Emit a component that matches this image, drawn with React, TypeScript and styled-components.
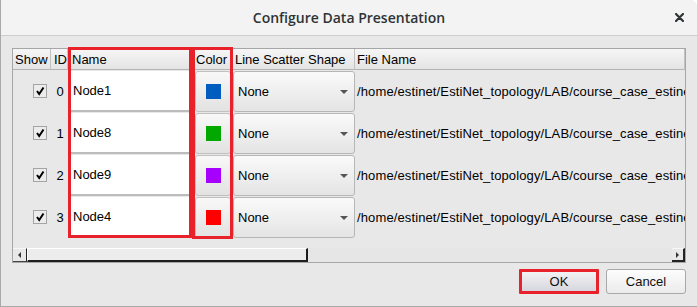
import React from 'react';
import styled, { createGlobalStyle } from 'styled-components';

const Global = createGlobalStyle`
  html, body { margin: 0; padding: 0; background: #ffffff; }
  body { font-family: "Liberation Sans", Arial, sans-serif; }
  * { box-sizing: border-box; }
`;

const Dialog = styled.div`
  position: relative;
  width: 697px;
  height: 307px;
  display: flex;
  flex-direction: column;
  background: #e8e8e8;
  border-left: 1px solid #a9a9a9;
  border-bottom: 1px solid #a9a9a9;
  border-top-right-radius: 7px;
  overflow: hidden;
`;

const TitleBar = styled.div`
  height: 36px;
  flex: none;
  display: grid;
  grid-template-columns: 1fr auto 1fr;
  align-items: center;
  background: #f3f3f3;
  border-bottom: 1px solid #cdcdcd;
`;

const Title = styled.div`
  grid-column: 2;
  font-family: "Open Sans", "Noto Sans", sans-serif;
  font-weight: 600;
  font-size: 14px;
  color: #2e3436;
`;

const Close = styled.div`
  grid-column: 3;
  justify-self: end;
  padding-right: 13px;
  display: flex;
  align-items: center;
`;

const Body = styled.div`
  flex: 1;
  display: flex;
  flex-direction: column;
  padding: 12px 11px 0 11px;
`;

const Frame = styled.div`
  height: 215px;
  border: 1px solid #a6a6a6;
  display: flex;
  flex-direction: column;
  overflow: hidden;
`;

const Table = styled.div`
  display: grid;
  grid-template-columns: 38px 17px 125px 39px 123px 1fr;
  grid-template-rows: 21px repeat(4, 42px);
  font-size: 13px;
  color: #000;
`;

const HeaderCell = styled.div<{ $pad?: number }>`
  display: flex;
  align-items: center;
  padding-left: ${(p) => p.$pad ?? 3}px;
  background: linear-gradient(#f6f6f6, #e4e4e4);
  border-right: 1px solid #c2c2c2;
  border-bottom: 1px solid #b4b4b4;
  white-space: nowrap;
  overflow: hidden;
`;

const ShowCell = styled.div`
  display: flex;
  align-items: center;
  justify-content: flex-end;
  padding-right: 4px;
`;

const Check = styled.div`
  width: 14px;
  height: 14px;
  border: 1px solid #a4a4a4;
  background: #ececec;
  display: flex;
  align-items: center;
  justify-content: center;
`;

const IdCell = styled.div`
  display: flex;
  align-items: center;
  justify-content: center;
  padding-left: 1px;
`;

const NameCell = styled.div`
  padding: 1px 2px 0 2px;
  display: flex;
`;

const NameBox = styled.div`
  flex: 1;
  background: #ffffff;
  border-bottom: 2px solid #bcbcbc;
  border-radius: 2px;
  display: flex;
  align-items: center;
  padding-left: 3px;
`;

const ColorCell = styled.div`
  padding: 1px 1px 0 2px;
  display: flex;
`;

const ColorButton = styled.div`
  flex: 1;
  border: 1px solid #c0c0c0;
  border-radius: 3px;
  background: linear-gradient(#f8f8f8, #e2e2e2);
  display: flex;
  align-items: center;
  justify-content: center;
`;

const Swatch = styled.div<{ $c: string }>`
  width: 15px;
  height: 15px;
  background: ${(p) => p.$c};
`;

const ShapeCell = styled.div`
  padding: 1px 0 0 1px;
  display: flex;
`;

const Combo = styled.div`
  flex: 1;
  border: 1px solid #b6b6b6;
  border-radius: 3px;
  background: linear-gradient(#fafafa, #e4e4e4);
  display: flex;
  align-items: center;
  justify-content: space-between;
  padding: 0 6px 0 4px;
`;

const Arrow = styled.div`
  width: 0;
  height: 0;
  border-left: 4px solid transparent;
  border-right: 4px solid transparent;
  border-top: 4px solid #555;
`;

const FileCell = styled.div`
  display: flex;
  align-items: center;
  padding-left: 2px;
  letter-spacing: 0.12px;
  white-space: nowrap;
  overflow: hidden;
`;

const Spacer = styled.div`
  flex: 1;
`;

const ScrollBar = styled.div`
  height: 14px;
  flex: none;
  display: flex;
`;

const ScrollBtn = styled.div<{ $dir: 'l' | 'r' }>`
  width: ${(p) => (p.$dir === 'l' ? 14 : 13)}px;
  background: #e8e8e8;
  border-top: 1px solid #f8f8f8;
  border-right: ${(p) => (p.$dir === 'l' ? '1px solid #222' : '2px solid #222')};
  border-bottom: ${(p) => (p.$dir === 'l' ? '1px solid #444' : '2px solid #222')};
  display: flex;
  align-items: center;
  justify-content: center;
`;

const Tri = styled.div<{ $dir: 'l' | 'r' }>`
  width: 0;
  height: 0;
  border-top: 3px solid transparent;
  border-bottom: 3px solid transparent;
  ${(p) => (p.$dir === 'l' ? 'border-right: 3px solid #333;' : 'border-left: 3px solid #333;')}
`;

const Thumb = styled.div`
  width: 281px;
  background: #ececec;
  border-top: 1px solid #ffffff;
  border-left: 1px solid #ffffff;
  border-right: 2px solid #1e1e1e;
  border-bottom: 2px solid #1e1e1e;
`;

const Track = styled.div`
  flex: 1;
  background: #e6e6e6;
`;

const ButtonRow = styled.div`
  display: flex;
  justify-content: flex-end;
  gap: 7px;
  margin-top: 6px;
`;

const Button = styled.div<{ $primary?: boolean }>`
  width: 80px;
  height: 25px;
  display: flex;
  align-items: center;
  justify-content: center;
  font-size: 13px;
  color: #111;
  border-radius: ${(p) => (p.$primary ? '1px' : '3px')};
  border: ${(p) => (p.$primary ? '3px solid #e8212a' : '1px solid #a8a8a8')};
  background: ${(p) =>
    p.$primary ? 'linear-gradient(#f2f2f4, #d6d6de)' : 'linear-gradient(#fdfdfd, #ebebeb)'};
`;

const Mark = styled.div<{ $x: number; $y: number; $w: number; $h: number }>`
  position: absolute;
  left: ${(p) => p.$x}px;
  top: ${(p) => p.$y}px;
  width: ${(p) => p.$w}px;
  height: ${(p) => p.$h}px;
  border: 3px solid #e8212a;
  pointer-events: none;
`;

const rows = [
  { id: 0, name: 'Node1', color: '#005cbf' },
  { id: 1, name: 'Node8', color: '#00a800' },
  { id: 2, name: 'Node9', color: '#a600ff' },
  { id: 3, name: 'Node4', color: '#ff0000' },
];

const FILE = '/home/estinet/EstiNet_topology/LAB/course_case_estinet';

export default function App() {
  return (
    <>
      <Global />
      <Dialog>
        <TitleBar>
          <Title>Configure Data Presentation</Title>
          <Close>
            <svg width="9" height="9" viewBox="0 0 9 9">
              <path d="M1 1 L8 8 M8 1 L1 8" stroke="#2e3436" strokeWidth="2.2" strokeLinecap="round" />
            </svg>
          </Close>
        </TitleBar>
        <Body>
          <Frame>
            <Table>
              <HeaderCell $pad={2}>Show</HeaderCell>
              <HeaderCell>ID</HeaderCell>
              <HeaderCell $pad={4}>Name</HeaderCell>
              <HeaderCell $pad={3}>Color</HeaderCell>
              <HeaderCell $pad={3}>Line Scatter Shape</HeaderCell>
              <HeaderCell $pad={2}>File Name</HeaderCell>
              {rows.map((r) => (
                <React.Fragment key={r.id}>
                  <ShowCell>
                    <Check>
                      <svg width="10" height="10" viewBox="0 0 10 10">
                        <path d="M2 5 L4.2 8 L8.5 1.5" stroke="#000" strokeWidth="2" fill="none" />
                      </svg>
                    </Check>
                  </ShowCell>
                  <IdCell>{r.id}</IdCell>
                  <NameCell>
                    <NameBox>{r.name}</NameBox>
                  </NameCell>
                  <ColorCell>
                    <ColorButton>
                      <Swatch $c={r.color} />
                    </ColorButton>
                  </ColorCell>
                  <ShapeCell>
                    <Combo>
                      <span>None</span>
                      <Arrow />
                    </Combo>
                  </ShapeCell>
                  <FileCell>{FILE}</FileCell>
                </React.Fragment>
              ))}
            </Table>
            <Spacer />
            <ScrollBar>
              <ScrollBtn $dir="l">
                <Tri $dir="l" />
              </ScrollBtn>
              <Thumb />
              <Track />
              <ScrollBtn $dir="r">
                <Tri $dir="r" />
              </ScrollBtn>
            </ScrollBar>
          </Frame>
          <ButtonRow>
            <Button $primary>OK</Button>
            <Button>Cancel</Button>
          </ButtonRow>
        </Body>
        <Mark $x={67} $y={47} $w={124} $h={191} />
        <Mark $x={191} $y={47} $w={41} $h={192} />
      </Dialog>
    </>
  );
}
